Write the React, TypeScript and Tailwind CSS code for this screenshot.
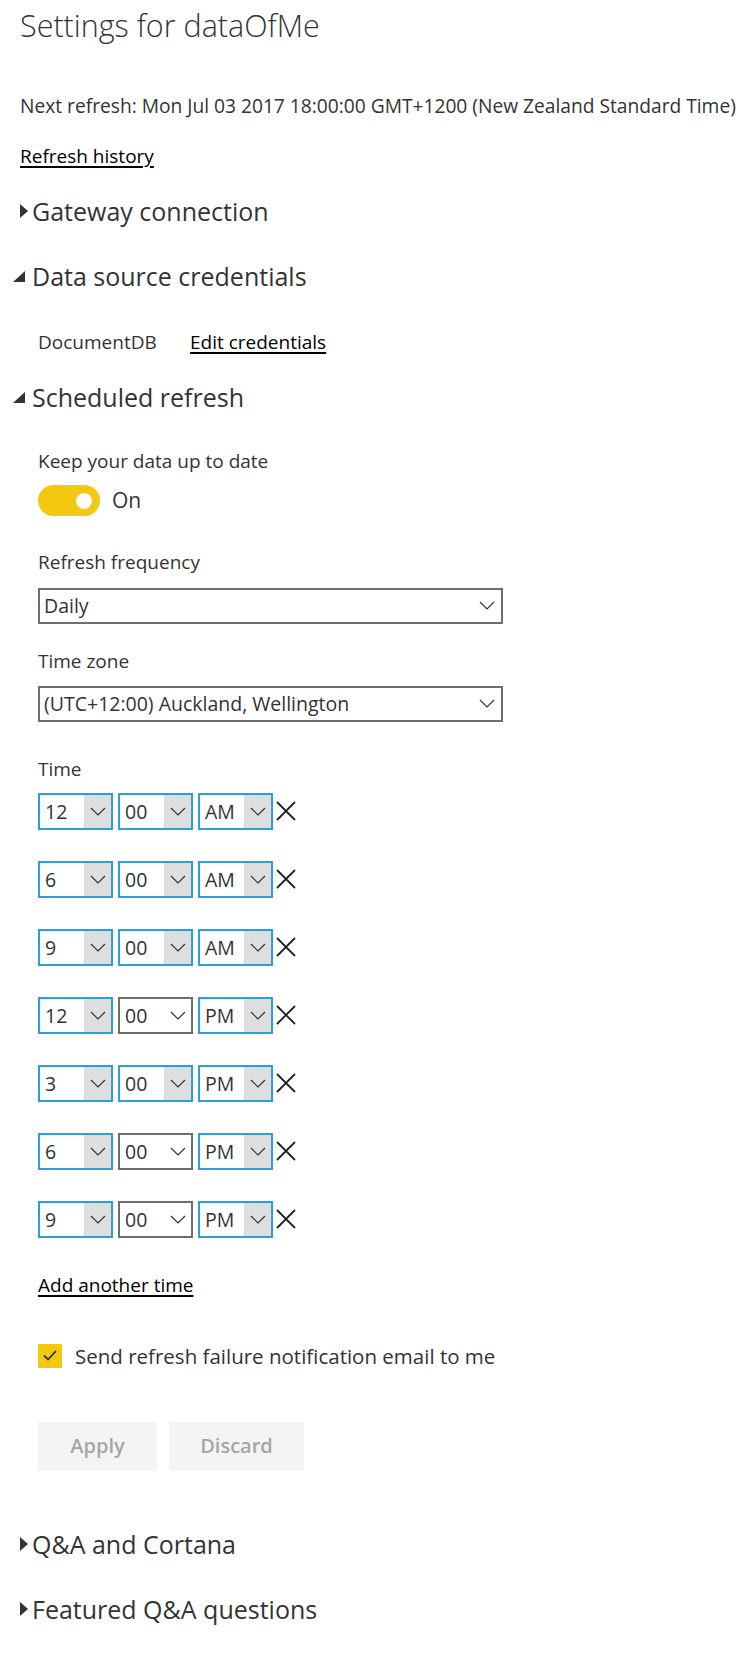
import React from "react"

const font = "font-['Open_Sans','Noto_Sans',sans-serif]"

function Caret({ open }: { open: boolean }) {
  return (
    <svg width="19" height="16" viewBox="0 0 19 16" className="-ml-[7px] shrink-0">
      {open ? (
        <path d="M0 14 L12 14 L12 3 Z" fill="#333333" />
      ) : (
        <path d="M7 1 L15 8 L7 15 Z" fill="#333333" />
      )}
    </svg>
  )
}

function Heading({ title, open, className = "" }: { title: string; open: boolean; className?: string }) {
  return (
    <div className={"flex items-center h-[32px] text-[25px] leading-[32px] text-[#333333] " + className}>
      <Caret open={open} />
      <span>{title}</span>
    </div>
  )
}

function Chevron() {
  return (
    <svg width="16" height="9" viewBox="0 0 16 9">
      <path d="M1 1 L8 8 L15 1" fill="none" stroke="#333333" strokeWidth="1.2" />
    </svg>
  )
}

function Dropdown({ value, className = "" }: { value: string; className?: string }) {
  return (
    <div className={"flex items-center w-[465px] h-[36px] border-2 border-[#6e6e6e] pl-[4px] pr-[6px] " + className}>
      <span className="flex-1 text-[19.5px]">{value}</span>
      <Chevron />
    </div>
  )
}

function TimeBox({ value, blue }: { value: string; blue: boolean }) {
  return (
    <div
      className={
        "flex w-[75px] h-[37px] border-2 " + (blue ? "border-[#2a9fd9]" : "border-[#6e6e6e]")
      }
    >
      <span className="flex-1 pl-[5px] text-[19.5px] leading-[33px]">{value}</span>
      <span className={"flex items-center justify-center w-[27px] " + (blue ? "bg-[#dedede]" : "bg-white")}>
        <Chevron />
      </span>
    </div>
  )
}

const times = [
  { h: "12", m: true, p: "AM" },
  { h: "6", m: true, p: "AM" },
  { h: "9", m: true, p: "AM" },
  { h: "12", m: false, p: "PM" },
  { h: "3", m: true, p: "PM" },
  { h: "6", m: false, p: "PM" },
  { h: "9", m: false, p: "PM" },
]

export default function App() {
  return (
    <div className={"w-[755px] min-h-[1654px] bg-white pl-[20px] pt-[5px] text-[#333333] " + font}>
      <h1 className="text-[30.5px] font-light leading-[40px]">Settings for dataOfMe</h1>

      <p className="mt-[49px] text-[19.2px] leading-[24px]">
        Next refresh: Mon Jul 03 2017 18:00:00 GMT+1200 (New Zealand Standard Time)
      </p>

      <a className="block mt-[26px] w-fit text-[19px] leading-[24px] text-black underline decoration-2 underline-offset-[3px]">
        Refresh history
      </a>

      <Heading title="Gateway connection" open={false} className="mt-[27px]" />
      <Heading title="Data source credentials" open={true} className="mt-[33px]" />

      <div className="mt-[38px] ml-[18px] flex text-[19px] leading-[24px]">
        <span className="w-[152px]">DocumentDB</span>
        <a className="text-black underline decoration-2 underline-offset-[3px]">Edit credentials</a>
      </div>

      <Heading title="Scheduled refresh" open={true} className="mt-[27px]" />

      <div className="ml-[18px]">
        <p className="mt-[36px] text-[19px] leading-[24px]">Keep your data up to date</p>
        <div className="mt-[12px] flex items-center gap-[12px]">
          <div className="flex items-center justify-end w-[62px] h-[31px] rounded-full bg-[#f2c811] pr-[8px]">
            <div className="w-[16px] h-[16px] rounded-full bg-white" />
          </div>
          <span className="text-[21px]">On</span>
        </div>

        <p className="mt-[33px] text-[19px] leading-[24px]">Refresh frequency</p>
        <Dropdown value="Daily" className="mt-[14px]" />

        <p className="mt-[25px] text-[19px] leading-[24px]">Time zone</p>
        <Dropdown value="(UTC+12:00) Auckland, Wellington" className="mt-[13px]" />

        <p className="mt-[35px] text-[19px] leading-[24px]">Time</p>
        <div className="mt-[12px] flex flex-col gap-[31px]">
          {times.map((t, i) => (
            <div key={i} className="flex items-center">
              <TimeBox value={t.h} blue={true} />
              <div className="ml-[5px]">
                <TimeBox value="00" blue={t.m} />
              </div>
              <div className="ml-[5px]">
                <TimeBox value={t.p} blue={true} />
              </div>
              <svg width="20" height="20" viewBox="0 0 20 20" className="ml-[3px]">
                <path d="M1 1 L19 19 M19 1 L1 19" stroke="#222222" strokeWidth="1.8" />
              </svg>
            </div>
          ))}
        </div>

        <a className="block mt-[35px] w-fit text-[19px] leading-[24px] text-black underline decoration-2 underline-offset-[3px]">
          Add another time
        </a>

        <div className="mt-[47px] flex items-center gap-[13px]">
          <div className="flex items-center justify-center w-[24px] h-[24px] bg-[#f2c811]">
            <svg width="14" height="11" viewBox="0 0 14 11">
              <path d="M1 5.5 L5 9.5 L13 1" fill="none" stroke="#333333" strokeWidth="1.8" />
            </svg>
          </div>
          <span className="text-[20.5px] leading-[24px]">Send refresh failure notification email to me</span>
        </div>

        <div className="mt-[54px] flex gap-[12px]">
          <button className="w-[119px] h-[49px] bg-[#f4f4f4] text-[20px] font-semibold text-[#a6a6a6]">Apply</button>
          <button className="w-[135px] h-[49px] bg-[#f4f4f4] text-[20px] font-semibold text-[#a6a6a6]">Discard</button>
        </div>
      </div>

      <Heading title="Q&A and Cortana" open={false} className="mt-[57px]" />
      <Heading title="Featured Q&A questions" open={false} className="mt-[33px]" />
    </div>
  )
}
